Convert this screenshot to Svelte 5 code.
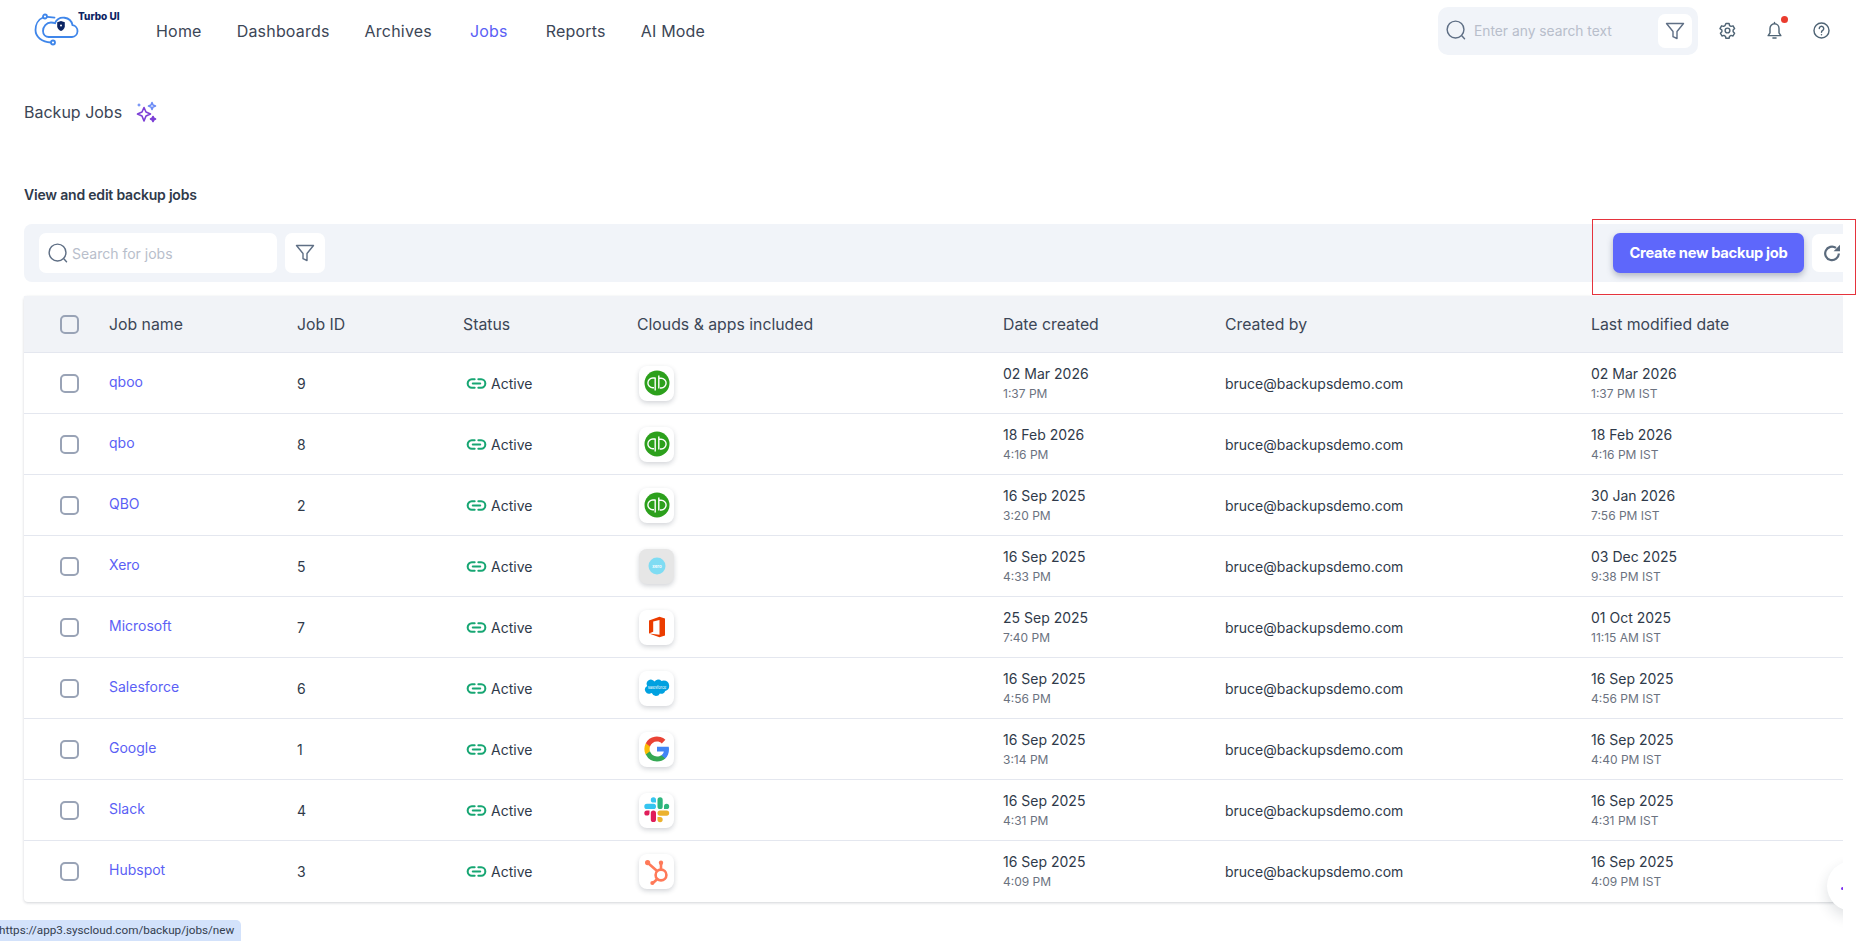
<script lang="ts">
  // Backup jobs listing page
  const nav = ["Home", "Dashboards", "Archives", "Jobs", "Reports", "AI Mode"];

  const jobs = [
    { name: "qboo", id: 9, app: "qb", created: "02 Mar 2026", createdAt: "1:37 PM", modified: "02 Mar 2026", modifiedAt: "1:37 PM IST" },
    { name: "qbo", id: 8, app: "qb", created: "18 Feb 2026", createdAt: "4:16 PM", modified: "18 Feb 2026", modifiedAt: "4:16 PM IST" },
    { name: "QBO", id: 2, app: "qb", created: "16 Sep 2025", createdAt: "3:20 PM", modified: "30 Jan 2026", modifiedAt: "7:56 PM IST" },
    { name: "Xero", id: 5, app: "xero", created: "16 Sep 2025", createdAt: "4:33 PM", modified: "03 Dec 2025", modifiedAt: "9:38 PM IST" },
    { name: "Microsoft", id: 7, app: "office", created: "25 Sep 2025", createdAt: "7:40 PM", modified: "01 Oct 2025", modifiedAt: "11:15 AM IST" },
    { name: "Salesforce", id: 6, app: "sf", created: "16 Sep 2025", createdAt: "4:56 PM", modified: "16 Sep 2025", modifiedAt: "4:56 PM IST" },
    { name: "Google", id: 1, app: "google", created: "16 Sep 2025", createdAt: "3:14 PM", modified: "16 Sep 2025", modifiedAt: "4:40 PM IST" },
    { name: "Slack", id: 4, app: "slack", created: "16 Sep 2025", createdAt: "4:31 PM", modified: "16 Sep 2025", modifiedAt: "4:31 PM IST" },
    { name: "Hubspot", id: 3, app: "hubspot", created: "16 Sep 2025", createdAt: "4:09 PM", modified: "16 Sep 2025", modifiedAt: "4:09 PM IST" },
  ];
</script>

{#snippet searchIcon()}
  <svg class="search-icon" viewBox="0 0 22 22" fill="none" stroke="#5f6f85" stroke-width="1.5" stroke-linecap="round">
    <circle cx="10" cy="10" r="8.800" />
    <path d="M16.800 16.800l2.600 2.800" />
  </svg>
{/snippet}

{#snippet filterIcon()}
  <svg class="filter-icon" viewBox="0 0 20 20" fill="none" stroke="#5f6f85" stroke-width="1.400" stroke-linejoin="round">
    <path d="M1.500 2.500h17l-6.500 8v7l-4-1.800v-5.200z" />
  </svg>
{/snippet}

{#snippet appLogo(app: string)}
  <svg viewBox="0 0 26 26" class="logo">
    {#if app === "qb"}
      <circle cx="13" cy="13" r="12.500" fill="#2ca01c" />
      <path d="M11.200 7.500v13M11.200 8H8.800a4.800 4.800 0 0 0 0 9.800H10M14.800 18.500V5.500M14.800 8.200h2.400a4.800 4.800 0 0 1 0 9.800H16" fill="none" stroke="#fff" stroke-width="1.400" />
    {:else if app === "xero"}
      <circle cx="13" cy="13" r="8.500" fill="#7fdcf3" />
      <text x="13" y="14.600" text-anchor="middle" font-size="4.400" font-family="Inter, sans-serif" font-weight="600" fill="#fff">xero</text>
    {:else if app === "office"}
      <path d="M5 19.500V6.500L15.500 2.800l5.500 1.700v17l-5.500 1.700L5 19.500l10.500 1.300V6L9.200 7.500v10.200z" fill="#eb3c00" />
    {:else if app === "sf"}
      <path d="M10.500 6.600a4.300 4.300 0 0 1 7-.7 5 5 0 0 1 2.200-.5 5.400 5.400 0 0 1 1.500 10.600 3.900 3.900 0 0 1-5.300 2.400 4.400 4.400 0 0 1-8.100-.3 3.600 3.600 0 0 1-.9.100A3.800 3.800 0 0 1 3.200 11a4.200 4.200 0 0 1 7.300-4.400z" fill="#00a1e0" />
      <text x="13" y="13.600" text-anchor="middle" font-size="3.800" font-family="Inter, sans-serif" fill="#fff">salesforce</text>
    {:else if app === "google"}
      <path d="M25 13.300c0-.9-.1-1.800-.3-2.600H13v4.900h6.800c-.3 1.600-1.200 2.900-2.500 3.800v3.200h4C23.700 20.400 25 17.200 25 13.300z" fill="#4285f4" />
      <path d="M13 25.500c3.400 0 6.200-1.100 8.300-3l-4-3.200c-1.100.8-2.600 1.200-4.300 1.200-3.300 0-6-2.200-7-5.200H1.800v3.300A12.500 12.500 0 0 0 13 25.500z" fill="#34a853" />
      <path d="M6 15.300a7.500 7.500 0 0 1 0-4.800V7.200H1.800a12.500 12.500 0 0 0 0 11.400z" fill="#fbbc05" />
      <path d="M13 5.500c1.800 0 3.500.6 4.800 1.900l3.600-3.600A12.500 12.500 0 0 0 1.800 7.200L6 10.500c1-3 3.700-5 7-5z" fill="#ea4335" />
    {:else if app === "slack"}
      <path d="M5.500 16a2.600 2.600 0 1 1-2.600-2.600h2.600zM6.800 16a2.600 2.600 0 0 1 5.200 0v6.500a2.600 2.600 0 0 1-5.200 0z" fill="#e01e5a" />
      <path d="M9.400 5.500a2.600 2.600 0 1 1 2.600-2.600v2.600zM9.400 6.800a2.600 2.600 0 0 1 0 5.200H2.900a2.600 2.600 0 0 1 0-5.200z" fill="#36c5f0" />
      <path d="M20 9.400a2.600 2.600 0 1 1 2.600 2.600H20zM18.700 9.400a2.600 2.600 0 0 1-5.200 0V2.900a2.600 2.600 0 0 1 5.200 0z" fill="#2eb67d" />
      <path d="M16.100 20a2.600 2.600 0 1 1-2.600 2.600V20zM16.100 18.700a2.600 2.600 0 0 1 0-5.200h6.500a2.600 2.600 0 0 1 0 5.200z" fill="#ecb22e" />
    {:else}
      <g fill="none" stroke="#ff7a59" stroke-width="2.600" stroke-linecap="round">
        <circle cx="17" cy="16" r="5.400" />
        <path d="M17 10.500V5M4.500 4.500l8.600 7.400M13.300 20l-4.300 4" />
      </g>
      <circle cx="17" cy="3.800" r="2.200" fill="#ff7a59" />
      <circle cx="3.600" cy="3.600" r="2.600" fill="#ff7a59" />
      <circle cx="8.300" cy="24" r="2" fill="#ff7a59" />
    {/if}
  </svg>
{/snippet}

<div class="page">
  <header class="topbar">
    <div class="brand">
      <svg class="cloud" viewBox="0 0 46 34" fill="none" stroke="#3f86ea" stroke-width="1.800" stroke-linecap="round">
        <path d="M15 24h23a6 6 0 0 0 .5-11.900A9.300 9.300 0 0 0 21 10" />
        <path d="M15 24c-3.500 0-6-2.600-6-6 0-4.500 3.500-8.500 8-8.500 1.200 0 2.800.2 4 .8" />
        <path d="M9 4.500C4 6.500 1.500 12 1.500 17c0 7 6.500 12 15.500 12.500" />
        <path d="M13.500 3.800l7 .8" />
        <circle cx="11" cy="3.500" r="2" />
        <circle cx="19" cy="29.500" r="2" />
        <path d="M27 8l3.800 1.300v3.900c0 2.100-1.600 3.800-3.800 4.800-2.200-1-3.800-2.700-3.800-4.800V9.300z" fill="#0c2463" stroke="none" />
        <circle cx="27" cy="12.500" r="1" fill="#fff" stroke="none" />
      </svg>
      <span class="brand-name">Turbo UI</span>
    </div>
    <nav class="nav">
      {#each nav as item}
        <a href="#top" class:current={item === "Jobs"}>{item}</a>
      {/each}
    </nav>
    <div class="top-actions">
      <div class="global-search">
        {@render searchIcon()}
        <span class="placeholder">Enter any search text</span>
        <button type="button" class="filter-btn">{@render filterIcon()}</button>
      </div>
      <svg class="action" viewBox="0 0 24 24" fill="none" stroke="#4f6475" stroke-width="1.800" stroke-linejoin="round">
        <path d="M10 3.200h4l.6 2.500 1.900 1.100 2.500-.7 2 3.500-1.900 1.800v2.200l1.900 1.800-2 3.500-2.500-.7-1.900 1.100-.6 2.500h-4l-.6-2.500-1.900-1.100-2.500.7-2-3.500 1.900-1.800v-2.200L2.500 9.600l2-3.500 2.500.7 1.900-1.100z" />
        <circle cx="12" cy="12" r="3" />
      </svg>
      <span class="bell">
        <svg class="action" viewBox="0 0 24 24" fill="none" stroke="#4f6475" stroke-width="1.800" stroke-linecap="round" stroke-linejoin="round">
          <path d="M12 3.500c-3.500 0-5.700 2.800-5.700 6v5.500L4 18.500h16L17.700 15V9.500c0-3.200-2.200-6-5.700-6zM12 2v1.500M10 21.500h4" />
        </svg>
        <span class="dot"></span>
      </span>
      <svg class="action" viewBox="0 0 24 24" fill="none" stroke="#4f6475" stroke-width="1.800" stroke-linecap="round">
        <circle cx="12" cy="12" r="9.500" />
        <path d="M9.200 9.500a2.800 2.800 0 1 1 4.300 2.400c-1 .6-1.500 1.200-1.500 2.300" />
        <path d="M12 17.200v.1" />
      </svg>
    </div>
  </header>

  <div class="title-row">
    <h1>Backup Jobs</h1>
    <svg class="sparkle" viewBox="0 0 24 24" fill="none" stroke-width="1.600" stroke-linejoin="round">
      <path d="M10 7.500l2 4.500 4.500 2-4.500 2-2 5-2-5-4.500-2 4.500-2z" stroke="#7c3fd6" />
      <path d="M18 2.500l1 2.500 2.500 1-2.500 1-1 2.500-1-2.500-2.500-1 2.500-1z" stroke="#6c8cf5" />
      <path d="M19 16.500l.9 1.600 1.600.9-1.600.9-.9 1.600-.9-1.600-1.600-.9 1.600-.9z" stroke="#7c3fd6" fill="#7c3fd6" />
      <path d="M5 3l.7 1.300L7 5l-1.300.7L5 7l-.7-1.300L3 5l1.300-.7z" fill="#6c8cf5" />
    </svg>
  </div>

  <h2>View and edit backup jobs</h2>

  <div class="content">
    <div class="toolbar">
      <div class="job-search">
        {@render searchIcon()}
        <span class="placeholder">Search for jobs</span>
      </div>
      <button type="button" class="filter-btn">{@render filterIcon()}</button>
      <button type="button" class="create">Create new backup job</button>
      <button type="button" class="refresh" aria-label="Refresh">
        <svg viewBox="0 0 20 20" fill="none" stroke="#5b6b7d" stroke-width="2.200" width="20" height="20">
          <path d="M16.800 10.500A6.800 6.800 0 1 1 14 4.900" />
          <path d="M18 1.800v6.400h-6.400z" fill="#5b6b7d" stroke="none" />
        </svg>
      </button>
    </div>

    <div class="table">
      <div class="row head">
        <span class="box"></span>
        <span>Job name</span>
        <span>Job ID</span>
        <span>Status</span>
        <span>Clouds &amp; apps included</span>
        <span>Date created</span>
        <span>Created by</span>
        <span>Last modified date</span>
      </div>
      {#each jobs as job}
        <div class="row">
          <span class="box"></span>
          <a class="job-link" href="#top">{job.name}</a>
          <span class="cell">{job.id}</span>
          <span class="status">
            <svg viewBox="0 0 22 14" width="21" height="13" fill="none" stroke="#17a673" stroke-width="2.200" stroke-linecap="round">
              <path d="M9 2.500H6a4.500 4.500 0 0 0 0 9h3M13 2.500h3a4.500 4.500 0 0 1 0 9h-3M7 7h8" />
            </svg>
            Active
          </span>
          <span class="logo-card" class:muted={job.app === "xero"}>{@render appLogo(job.app)}</span>
          <span class="stack">
            <span>{job.created}</span>
            <small>{job.createdAt}</small>
          </span>
          <span class="cell">bruce@backupsdemo.com</span>
          <span class="stack">
            <span>{job.modified}</span>
            <small>{job.modifiedAt}</small>
          </span>
        </div>
      {/each}
    </div>
  </div>

  <div class="float-btn"><span></span></div>
  <div class="url-tip">https://app3.syscloud.com/backup/jobs/new</div>
  <div class="highlight"></div>
</div>

<style>
  :global(body) {
    margin: 0;
    background: #fff;
    font-family: Inter, "Liberation Sans", sans-serif;
    color: #2f3a4a;
  }
  .page {
    position: relative;
    height: 941px;
    width: 1856px;
    overflow: hidden;
  }
  .topbar {
    display: flex;
    align-items: center;
    height: 61px;
    padding: 0 0 0 33px;
  }
  .brand {
    display: flex;
    align-items: flex-start;
    width: 123px;
    height: 50px;
  }
  .cloud {
    width: 46px;
    height: 34px;
    margin: 7px 0 0 1px;
    flex: none;
  }
  .brand-name {
    font-size: 10px;
    line-height: 12px;
    font-weight: 800;
    color: #0c2463;
    margin: 4px 0 0 -2px;
  }
  .nav {
    display: flex;
    gap: 35px;
    font-size: 16px;
    letter-spacing: 0.2px;
  }
  .nav a {
    color: #3c4656;
    text-decoration: none;
  }
  .nav a.current {
    color: #5b5ff5;
    margin: 0 3px;
  }
  .top-actions {
    margin-left: auto;
    display: flex;
    align-items: center;
    margin-right: 25px;
  }
  .global-search {
    display: flex;
    align-items: center;
    width: 260px;
    height: 48px;
    box-sizing: border-box;
    padding: 0 6px 0 8px;
    background: #f1f4f9;
    border-radius: 10px;
    margin-right: 20px;
  }
  .search-icon {
    width: 21px;
    height: 21px;
    flex: none;
  }
  .placeholder {
    font-size: 13.800px;
    color: #b8becb;
    margin-left: 7px;
  }
  .filter-btn {
    display: flex;
    align-items: center;
    justify-content: center;
    width: 34px;
    height: 34px;
    padding: 0;
    border: 0;
    background: #fff;
    border-radius: 7px;
  }
  .global-search .filter-btn {
    margin-left: auto;
  }
  .filter-icon {
    width: 20px;
    height: 20px;
  }
  .action {
    width: 19px;
    height: 19px;
    display: block;
  }
  .top-actions > .action + .bell,
  .bell + .action {
    margin-left: 28px;
  }
  .bell {
    position: relative;
    display: block;
  }
  .dot {
    position: absolute;
    top: -5px;
    right: -4px;
    width: 7px;
    height: 7px;
    border-radius: 50%;
    background: #ea3b2e;
  }
  .title-row {
    display: flex;
    align-items: center;
    gap: 12px;
    padding: 38px 0 0 24px;
    height: 26px;
  }
  h1 {
    margin: 0;
    font-size: 16px;
    font-weight: 400;
    color: #3c4656;
  }
  .sparkle {
    width: 24px;
    height: 24px;
  }
  h2 {
    margin: 60px 0 0 24px;
    font-size: 14px;
    line-height: 20px;
    font-weight: 600;
    letter-spacing: -0.2px;
    color: #2f3a4a;
  }
  .content {
    width: 1819px;
    margin: 19px 0 0 24px;
  }
  .toolbar {
    display: flex;
    align-items: center;
    height: 58px;
    padding-left: 15px;
    background: #f1f4f9;
    border-radius: 8px 0 0 8px;
    box-sizing: border-box;
  }
  .job-search {
    display: flex;
    align-items: center;
    width: 238px;
    height: 40px;
    box-sizing: border-box;
    padding-left: 9px;
    background: #fff;
    border-radius: 7px;
    margin-right: 8px;
  }
  .job-search .placeholder {
    margin-left: 3px;
    font-size: 14px;
  }
  .toolbar > .filter-btn {
    width: 40px;
    height: 40px;
  }
  .create {
    margin-left: auto;
    width: 191px;
    height: 40px;
    border: 0;
    border-radius: 7px;
    background: #5e67fb;
    color: #fff;
    font-family: inherit;
    font-size: 14.700px;
    font-weight: 700;
    letter-spacing: -0.3px;
    box-shadow: 0 3px 6px rgba(60, 70, 100, 0.35);
  }
  .refresh {
    display: flex;
    align-items: center;
    justify-content: flex-start;
    width: 31px;
    height: 38px;
    margin-left: 8px;
    padding: 0 0 0 10px;
    border: 0;
    background: #fff;
    border-radius: 7px 0 0 7px;
  }
  .table {
    margin-top: 14px;
    border-radius: 4px 0 0 4px;
    box-shadow: 0 1px 3px rgba(30, 40, 60, 0.2);
  }
  .row {
    display: grid;
    grid-template-columns: 85px 188px 166px 174px 366px 222px 366px 1fr;
    align-items: center;
    height: 61px;
    box-sizing: border-box;
    border-bottom: 1px solid #e4e7ef;
    font-size: 14px;
    color: #2f3a4a;
  }
  .row:last-child {
    border-bottom: 0;
  }
  .head {
    height: 57px;
    background: #f1f3f7;
    font-size: 15.800px;
    color: #3c4656;
  }
  .box {
    justify-self: start;
    margin-left: 36px;
    width: 15px;
    height: 15px;
    border: 2px solid #99a3b6;
    border-radius: 5px;
  }
  .job-link {
    color: #5b5ff5;
    font-size: 14px;
    text-decoration: none;
    margin-top: -4px;
  }
  .status {
    display: flex;
    align-items: center;
    gap: 4px;
    padding-left: 3px;
    font-size: 14px;
  }
  .logo-card {
    display: flex;
    align-items: center;
    justify-content: center;
    width: 35px;
    height: 35px;
    margin-left: 2px;
    background: #fff;
    border-radius: 8px;
    box-shadow: 0 2px 5px rgba(30, 40, 60, 0.2);
  }
  .logo-card.muted {
    background: #e6e6e6;
  }
  .logo {
    width: 26px;
    height: 26px;
  }
  .stack {
    display: flex;
    flex-direction: column;
    gap: 3px;
    line-height: 18px;
  }
  small {
    font-size: 12px;
    line-height: 16px;
    color: #6b7280;
  }
  .float-btn {
    position: absolute;
    left: 1827px;
    top: 861px;
    width: 50px;
    height: 50px;
    border-radius: 50%;
    background: #fff;
    box-shadow: 0 6px 14px rgba(30, 40, 60, 0.14);
  }
  .float-btn span {
    position: absolute;
    left: 14px;
    top: 26px;
    width: 3px;
    height: 3px;
    border-radius: 50%;
    background: #7c2ff0;
  }
  .page::after {
    content: "";
    position: absolute;
    left: 1843px;
    top: 0;
    width: 13px;
    height: 100%;
    background: #fff;
  }
  .url-tip {
    position: absolute;
    left: -4px;
    bottom: 0;
    height: 21px;
    padding: 0 7px 0 3px;
    background: #d3e2fb;
    border-top-right-radius: 5px;
    font-family: Roboto, sans-serif;
    font-size: 11.700px;
    line-height: 21px;
    color: #33404f;
    z-index: 2;
  }
  .highlight {
    position: absolute;
    left: 1592px;
    top: 219px;
    width: 262px;
    height: 74px;
    border: 1px solid #e5333d;
    z-index: 2;
  }
</style>
